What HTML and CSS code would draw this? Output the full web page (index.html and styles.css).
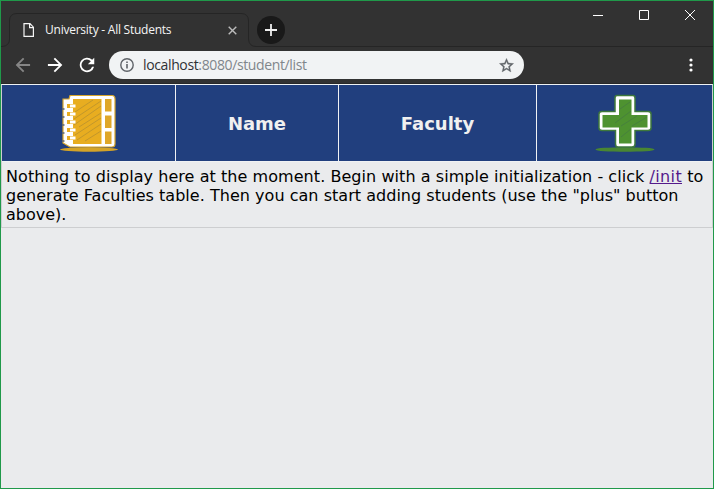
FILE: index.html
```html
<!DOCTYPE html>
<html lang="en">
<head>
<meta charset="utf-8">
<title>University - All Students</title>
<link rel="stylesheet" href="styles.css">
</head>
<body>
<div class="window">
  <header class="titlebar">
    <svg class="tab-outline" width="712" height="46" viewBox="1 1 712 46" fill="none" stroke="#252525"><path d="M1 46.500H2Q9.500 46 9.500 39V21Q9.500 13.500 17 13.500H241Q248.500 13.500 248.500 21V39Q249 46.500 256 46.500H713"/></svg>
    <div class="tab">
      <svg class="page-icon" width="12" height="14" viewBox="0 0 12 14" fill="none" stroke="#f4f4f4" stroke-width="1.200"><path d="M1 .7H7L10.400 4.200V13.300H1ZM6.600 .7V4.600H10.400"/></svg>
      <span class="tab-title">University - All Students</span>
      <svg class="tab-close" width="9" height="9" viewBox="0 0 9 9" stroke="#bcbcbc" stroke-width="1.400"><path d="M.7 .7 8.300 8.300M8.300 .7 .7 8.300"/></svg>
    </div>
    <div class="new-tab"><svg width="12" height="12" viewBox="0 0 12 12" stroke="#eee" stroke-width="1.800"><path d="M6 0V12M0 6H12"/></svg></div>
    <div class="controls">
      <svg width="10" height="10" viewBox="0 0 10 10" stroke="#fff"><path d="M0 5.500H10"/></svg>
      <svg width="10" height="10" viewBox="0 0 10 10" fill="none" stroke="#fff"><path d="M.5 .5H9.500V9.500H.5Z"/></svg>
      <svg width="10" height="10" viewBox="0 0 10 10" stroke="#fff"><path d="M0 0 10 10M10 0 0 10"/></svg>
    </div>
  </header>
  <nav class="toolbar">
    <svg class="nav-icon" width="20" height="20" viewBox="0 0 24 24" fill="#868686"><path d="M20.500 10.900H7.500L13.600 4.800 12 3.200 3.200 12 12 20.800 13.600 19.200 7.500 13.100H20.500Z"/></svg>
    <svg class="nav-icon" width="20" height="20" viewBox="0 0 24 24" fill="#fff"><path d="M3.500 10.900H16.500L10.400 4.800 12 3.200 20.800 12 12 20.800 10.400 19.200 16.500 13.100H3.500Z"/></svg>
    <svg class="nav-icon" width="20" height="20" viewBox="0 0 24 24" fill="#fff"><path d="M18.200 5.800A8.700 8.700 0 1 0 20.500 14H18.100A6.500 6.500 0 1 1 16.600 7.400L13 11H20.700V3.300Z"/></svg>
    <div class="address">
      <svg class="info" width="14" height="14" viewBox="0 0 14 14" fill="none" stroke="#5f6368" stroke-width="1.400"><circle cx="7" cy="7" r="6.200"/><path d="M7 6V10.400M7 3.500V5" stroke-width="1.600"/></svg>
      <span class="url"><span class="host">localhost</span>:8080/student/list</span>
      <svg class="star" width="17" height="17" viewBox="0 0 24 24" fill="#5f6368" stroke="#5f6368" stroke-width=".5"><path d="M22 9.240 14.810 8.620 12 2 9.190 8.630 2 9.240 7.460 13.970 5.820 21 12 17.270 18.180 21 16.550 13.970ZM12 15.400 8.240 17.670 9.240 13.390 5.920 10.510 10.300 10.130 12 6.100 13.710 10.140 18.090 10.520 14.770 13.400 15.770 17.680Z"/></svg>
    </div>
    <svg class="more" width="4" height="14" viewBox="0 0 4 14" fill="#fff"><circle cx="2" cy="2" r="1.600"/><circle cx="2" cy="7" r="1.600"/><circle cx="2" cy="12" r="1.600"/></svg>
  </nav>
  <main>
    <div class="table">
      <div class="head">
        <div class="cell">
          <svg class="picture" width="64" height="64" viewBox="0 0 64 64">
            <ellipse cx="32" cy="57.500" rx="29" ry="2.200" fill="#d4a327"/>
            <path d="M13 3.500H55Q58 3.500 58 7V52Q58 55 55 55H13L6 51V7H12Z" fill="#fff" stroke="#d8a62b" stroke-width="1.200"/>
            <path d="M16 7H44.500V52H16Z" fill="#e8ad20"/>
            <path d="M18 20 36 8M17 27 44 9M17 33 44 14M22 35 44 21M18 43 44 26M20 48 44 32M28 49 44 39" stroke="#b8912f" stroke-width=".8"/>
            <path d="M48 7H54.500V19.500H48ZM48 23.500H54.500V36H48ZM48 39.500H54.500V52H48Z" fill="#dfa728"/>
            <path d="M10 14H16M10 22H16M10 30H16M10 38H16M10 46H16" stroke="#e8ad20" stroke-width="4"/>
            <path d="M13 14H18.500M13 22H18.500M13 30H18.500M13 38H18.500M13 46H18.500" stroke="#fff" stroke-width="2.800"/>
            <path d="M5 17H7.500M5 25H7.500M5 33H7.500M5 41H7.500M5 49H7.500" stroke="#5c6470" stroke-width="1.500"/>
          </svg>
        </div>
        <div class="cell">Name</div>
        <div class="cell">Faculty</div>
        <div class="cell">
          <svg class="picture" width="64" height="64" viewBox="0 0 64 64">
            <ellipse cx="32" cy="57.500" rx="29.500" ry="2.300" fill="#498632"/>
            <path d="M24 3.500H40Q42 3.500 42 6V19.500H55Q58 19.500 58 22V36Q58 38.500 55 38.500H42V52Q42 55 39 55H25Q22.500 55 22.500 52V38.500H9Q6 38.500 6 36V22Q6 19.500 9 19.500H22V6Q22 3.500 24 3.500Z" fill="#fff" stroke="#3f793c" stroke-width="1.500"/>
            <path d="M26 7.500H38.500V23H54.500V35.500H38.500V51.500H26V35.500H9.500V23H26Z" fill="#4e9230"/>
            <path d="M27 17 37 10M22 31 38 19M28 34 44 24M39 34 54 25M28 45 38 37" stroke="#457c40" stroke-width=".8"/>
          </svg>
        </div>
      </div>
      <p class="message"><span class="opening">Nothing to display here at the moment. Begin with a simple initialization - click <a href="#">/init</a> to</span><br><span class="detail">generate Faculties table. Then you can start adding students (use the "plus" button</span><br>above).</p>
    </div>
  </main>
</div>
</body>
</html>
```
FILE: styles.css
```css
* { box-sizing: border-box; }
body { margin: 0; }
svg { display: block; flex: none; }
.window {
  width: 714px;
  height: 489px;
  border: 1px solid #20994a;
  background: #eaebed;
  overflow: hidden;
}
.titlebar {
  position: relative;
  display: flex;
  height: 46px;
  background: #323232;
}
.tab-outline { position: absolute; left: 0; top: 0; }
.tab {
  display: flex;
  align-items: center;
  width: 240px;
  height: 34px;
  margin: 12px 0 0 8px;
  padding: 0 12px 0 14px;
}
.tab-title {
  flex: 1;
  margin-left: 10px;
  color: #f5f5f5;
  font: 12px/16px "Open Sans", sans-serif;
  letter-spacing: -.24px;
  white-space: nowrap;
}
.new-tab {
  display: flex;
  align-items: center;
  justify-content: center;
  width: 28px;
  height: 28px;
  margin: 15px 0 0 8px;
  border-radius: 50%;
  background: #191919;
}
.controls { display: flex; gap: 36px; margin: 9px 18px 0 auto; }
.toolbar {
  display: flex;
  align-items: center;
  height: 37px;
  padding-left: 12px;
  border-bottom: 1px solid #292929;
  background: #323232;
}
.nav-icon { margin-right: 12px; }
.address {
  display: flex;
  align-items: center;
  width: 415px;
  height: 28px;
  padding: 0 9px 0 11px;
  border-radius: 14px;
  background: #f1f3f4;
}
.url {
  margin-left: 9px;
  color: #80868b;
  font: 14px/20px "Open Sans", sans-serif;
  letter-spacing: -.37px;
  white-space: nowrap;
}
.host { color: #303134; }
.star { margin-left: auto; }
.more { margin: 0 20px 0 auto; }
.table {
  border: 1px solid #cdced0;
  border-top-color: #eff2f3;
  font-family: "DejaVu Sans", Verdana, sans-serif;
}
.head {
  display: grid;
  grid-template-columns: 173px 163px 198px 176px;
  height: 77px;
  border-bottom: 1px solid #f0f2f4;
}
.cell {
  display: flex;
  align-items: center;
  justify-content: center;
  padding-top: 1px;
  background: #213f7e;
  color: #f0f0f0;
  font-weight: bold;
  font-size: 18px;
}
.cell + .cell { border-left: 1px solid #f0f2f4; }
.message {
  height: 65px;
  margin: 0;
  padding: 5px 4px;
  color: #000;
  font-size: 16px;
  line-height: 19px;
  white-space: nowrap;
}
.opening { letter-spacing: .06px; }
.detail { letter-spacing: .03px; }
.message a { color: #551a8b; letter-spacing: .35px; }
```
